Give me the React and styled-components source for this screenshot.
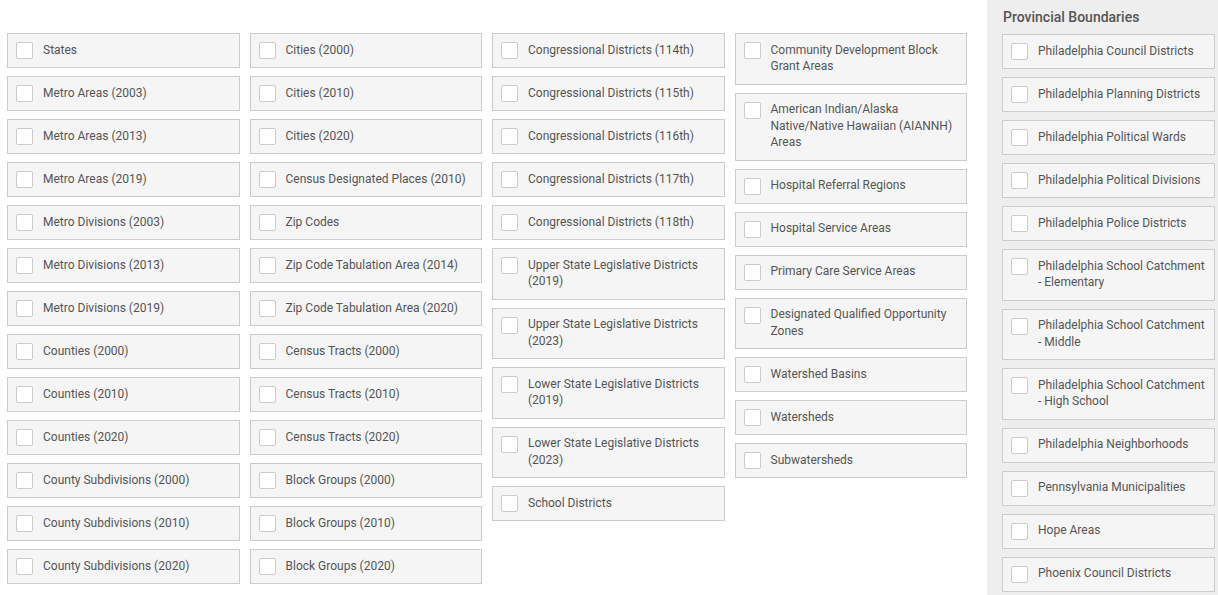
import styled, { createGlobalStyle } from "styled-components";

const GlobalStyle = createGlobalStyle`
  body {
    margin: 0;
    background: #fff;
    font-family: Roboto, "Liberation Sans", Arial, sans-serif;
  }
`;

const columns = [
  [
    "States",
    "Metro Areas (2003)",
    "Metro Areas (2013)",
    "Metro Areas (2019)",
    "Metro Divisions (2003)",
    "Metro Divisions (2013)",
    "Metro Divisions (2019)",
    "Counties (2000)",
    "Counties (2010)",
    "Counties (2020)",
    "County Subdivisions (2000)",
    "County Subdivisions (2010)",
    "County Subdivisions (2020)",
  ],
  [
    "Cities (2000)",
    "Cities (2010)",
    "Cities (2020)",
    "Census Designated Places (2010)",
    "Zip Codes",
    "Zip Code Tabulation Area (2014)",
    "Zip Code Tabulation Area (2020)",
    "Census Tracts (2000)",
    "Census Tracts (2010)",
    "Census Tracts (2020)",
    "Block Groups (2000)",
    "Block Groups (2010)",
    "Block Groups (2020)",
  ],
  [
    "Congressional Districts (114th)",
    "Congressional Districts (115th)",
    "Congressional Districts (116th)",
    "Congressional Districts (117th)",
    "Congressional Districts (118th)",
    "Upper State Legislative Districts (2019)",
    "Upper State Legislative Districts (2023)",
    "Lower State Legislative Districts (2019)",
    "Lower State Legislative Districts (2023)",
    "School Districts",
  ],
  [
    "Community Development Block Grant Areas",
    "American Indian/Alaska Native/Native Hawaiian (AIANNH) Areas",
    "Hospital Referral Regions",
    "Hospital Service Areas",
    "Primary Care Service Areas",
    "Designated Qualified Opportunity Zones",
    "Watershed Basins",
    "Watersheds",
    "Subwatersheds",
  ],
];

const provincial = [
  "Philadelphia Council Districts",
  "Philadelphia Planning Districts",
  "Philadelphia Political Wards",
  "Philadelphia Political Divisions",
  "Philadelphia Police Districts",
  "Philadelphia School Catchment - Elementary",
  "Philadelphia School Catchment - Middle",
  "Philadelphia School Catchment - High School",
  "Philadelphia Neighborhoods",
  "Pennsylvania Municipalities",
  "Hope Areas",
  "Phoenix Council Districts",
];

const Page = styled.div`
  display: flex;
  align-items: stretch;
  min-height: 100vh;
  overflow: hidden;
`;

const Columns = styled.div`
  display: flex;
  gap: 10px;
  padding: 33px 0 0 7px;
`;

const Column = styled.div`
  display: flex;
  flex-direction: column;
  gap: 8px;
  width: 232.5px;
`;

const Panel = styled.div`
  margin-left: 20px;
  width: 231px;
  flex-shrink: 0;
  background: #eeeeee;
  padding: 9px 3px 0 15px;
  box-sizing: border-box;
  display: flex;
  flex-direction: column;
`;

const PanelTitle = styled.div`
  font-size: 14px;
  font-weight: 500;
  line-height: 17px;
  color: #555;
  margin: 0 0 8px 1px;
`;

const PanelList = styled.div`
  display: flex;
  flex-direction: column;
  gap: 8px;
`;

const Option = styled.label`
  display: flex;
  align-items: flex-start;
  gap: 10px;
  padding: 8px 6px 8px 8px;
  background: #f5f5f5;
  border: 1px solid #cccccc;
  cursor: pointer;
`;

const Box = styled.span`
  flex: 0 0 auto;
  width: 17px;
  height: 17px;
  box-sizing: border-box;
  background: #fff;
  border: 1px solid #cccccc;
  border-radius: 2px;
`;

const Label = styled.span`
  font-size: 12px;
  line-height: 16.5px;
  color: #555;
  margin-top: -0.5px;
  padding-bottom: 1px;
`;

const LayerOption = ({ label }) => (
  <Option>
    <Box />
    <Label>{label}</Label>
  </Option>
);

export default function App() {
  return (
    <>
      <GlobalStyle />
      <Page>
        <Columns>
          {columns.map((col, i) => (
            <Column key={i}>
              {col.map((label) => (
                <LayerOption key={label} label={label} />
              ))}
            </Column>
          ))}
        </Columns>
        <Panel>
          <PanelTitle>Provincial Boundaries</PanelTitle>
          <PanelList>
            {provincial.map((label) => (
              <LayerOption key={label} label={label} />
            ))}
          </PanelList>
        </Panel>
      </Page>
    </>
  );
}
